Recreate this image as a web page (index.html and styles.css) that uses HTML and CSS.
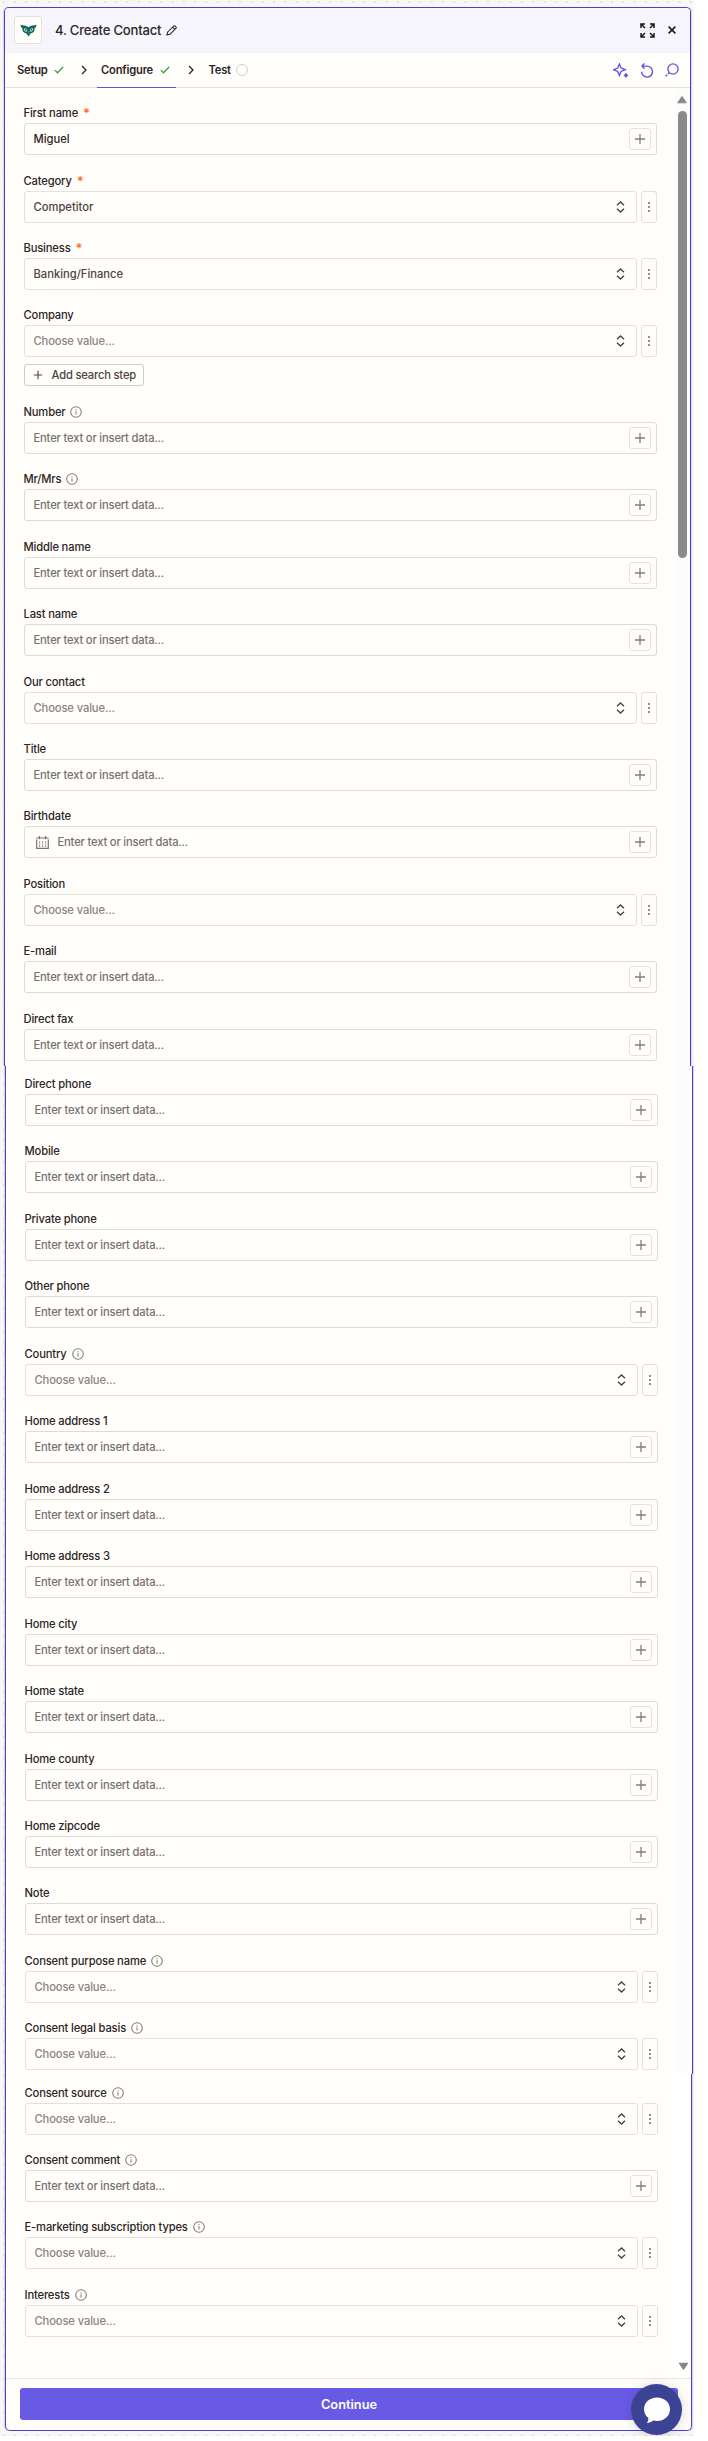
FILE: index.html
```html
<!DOCTYPE html>
<html lang="en">
<head>
<meta charset="utf-8">
<title>Create Contact</title>
<link rel="stylesheet" href="styles.css">
</head>
<body>
<svg class="defs" aria-hidden="true">
  <symbol id="plus" viewBox="0 0 12 12"><path d="M6 1v10M1 6h10" stroke="currentColor" stroke-width="1.3" fill="none"/></symbol>
  <symbol id="updown" viewBox="0 0 9 12"><path d="M1 4.2 4.5 1 8 4.2M1 7.8 4.5 11 8 7.8" stroke="#4a403d" stroke-width="1.35" fill="none"/></symbol>
  <symbol id="dots" viewBox="0 0 4 12"><g fill="#6f6966"><circle cx="2" cy="2" r="1"/><circle cx="2" cy="6" r="1"/><circle cx="2" cy="10" r="1"/></g></symbol>
  <symbol id="info" viewBox="0 0 12 12"><circle cx="6" cy="6" r="5.3" stroke="#7d7875" stroke-width="1.05" fill="none"/><path d="M6 5.2v3.4M6 3.2v1.1" stroke="#7d7875" stroke-width="1"/></symbol>
  <symbol id="check" viewBox="0 0 10 8"><path d="m.8 4.1 2.7 2.7L9.1 1" stroke="#2ba144" stroke-width="1.3" fill="none"/></symbol>
  <symbol id="chev" viewBox="0 0 6 10"><path d="m1 1 4 4-4 4" stroke="#2d2525" stroke-width="1.3" fill="none"/></symbol>
</svg>
<main class="canvas">
<section class="seg seg-a">
  <header class="head">
    <span class="app"><svg width="17" height="13" viewBox="0 0 17 13"><path d="M.5.8C3 1.600 6 1 8.500 3.300 11 1 14 1.600 16.500.8c-.1 1.900-.9 2.900-1.900 3.500.3 3-1.100 4.700-3.700 4.900L8.500 12.400 6.100 9.200C3.500 9 2.100 7.300 2.400 4.300 1.400 3.700.6 2.700.5.8z" fill="#17675f"/><path d="M3.900 4.500c1.300-.3 2.500.1 3.300 1.300l-.5 1.800c-1.700.3-2.800-1-2.800-3.100zM13.100 4.500c-1.300-.3-2.500.1-3.300 1.300l.5 1.800c1.700.3 2.800-1 2.800-3.100z" fill="#d7ece6"/><circle cx="5.700" cy="5.900" r=".8" fill="#17675f"/><circle cx="11.300" cy="5.900" r=".8" fill="#17675f"/><path d="m7.500 7 1 3 1-3" fill="#2d9a80"/></svg></span>
    <h1 class="title">4. Create Contact</h1>
    <svg class="pencil" width="11" height="11" viewBox="0 0 11 11"><path d="M.9 10.100 1.700 7 7.900.9q.5-.4 1 0l1.200 1.200q.4.500 0 1L3.900 9.300zM6.600 2.200l2.200 2.200" stroke="#2d2525" stroke-width="1.050" fill="none" stroke-linejoin="round"/></svg>
    <svg class="expand" width="15" height="15" viewBox="0 0 15 15"><path d="M1 5V1h4M1 1l4 4M10 1h4v4M14 1l-4 4M1 10v4h4M1 14l4-4M14 10v4h-4M14 14l-4-4" stroke="#1d1517" stroke-width="1.500" fill="none"/></svg>
    <svg class="close" width="8" height="8" viewBox="0 0 8 8"><path d="m.6.6 6.800 6.800M7.400.6.6 7.400" stroke="#1d1517" stroke-width="1.500"/></svg>
  </header>
  <nav class="tabs">
    <span class="tab">Setup <svg width="10" height="8"><use href="#check"/></svg></span>
    <svg class="chev" width="6" height="10"><use href="#chev"/></svg>
    <span class="tab tab-on">Configure <svg width="10" height="8"><use href="#check"/></svg></span>
    <svg class="chev" width="6" height="10"><use href="#chev"/></svg>
    <span class="tab tab-test">Test <i class="ring"></i></span>
    <span class="tools">
      <svg width="15" height="15" viewBox="0 0 15 15"><path d="M6.400 1 8 5l4.200 1.700L8 8.400l-1.600 4.100-1.700-4.100L.7 6.700 4.700 5z" stroke="#6353df" stroke-width="1.350" fill="none"/><path d="M12.900 10.200v4.200M10.800 12.300H15" stroke="#6353df" stroke-width="1.700"/></svg>
      <svg width="14" height="15" viewBox="0 0 14 15"><path d="M1.500 8.800a5.500 5.500 0 1 0 5.500-5.700H2M4.500.5 1.900 3.100l2.600 2.700" stroke="#6353df" stroke-width="1.400" fill="none"/></svg>
      <svg width="14" height="14" viewBox="0 0 14 14"><circle cx="8" cy="6" r="5.100" stroke="#6353df" stroke-width="1.350" fill="none"/><path d="M4.200 9.800 3 11M2.200 11.800.8 13.200" stroke="#6353df" stroke-width="1.600"/></svg>
    </span>
  </nav>
  <div class="body">
    <div class="fields">
      <div class="field"><div class="label">First name <b>*</b></div><div class="row"><div class="box input value-strong">Miguel<span class="add"><svg><use href="#plus"/></svg></span></div></div></div>
      <div class="field"><div class="label">Category <b>*</b></div><div class="row"><div class="box value">Competitor<svg class="ud"><use href="#updown"/></svg></div><div class="more"><svg><use href="#dots"/></svg></div></div></div>
      <div class="field"><div class="label">Business <b>*</b></div><div class="row"><div class="box value">Banking/Finance<svg class="ud"><use href="#updown"/></svg></div><div class="more"><svg><use href="#dots"/></svg></div></div></div>
      <div class="field field-step"><div class="label">Company</div><div class="row"><div class="box">Choose value...<svg class="ud"><use href="#updown"/></svg></div><div class="more"><svg><use href="#dots"/></svg></div></div><div class="step"><svg><use href="#plus"/></svg>Add search step</div></div>
      <div class="field"><div class="label">Number <svg><use href="#info"/></svg></div><div class="row"><div class="box input">Enter text or insert data...<span class="add"><svg><use href="#plus"/></svg></span></div></div></div>
      <div class="field"><div class="label">Mr/Mrs <svg><use href="#info"/></svg></div><div class="row"><div class="box input">Enter text or insert data...<span class="add"><svg><use href="#plus"/></svg></span></div></div></div>
      <div class="field"><div class="label">Middle name</div><div class="row"><div class="box input">Enter text or insert data...<span class="add"><svg><use href="#plus"/></svg></span></div></div></div>
      <div class="field"><div class="label">Last name</div><div class="row"><div class="box input">Enter text or insert data...<span class="add"><svg><use href="#plus"/></svg></span></div></div></div>
      <div class="field"><div class="label">Our contact</div><div class="row"><div class="box">Choose value...<svg class="ud"><use href="#updown"/></svg></div><div class="more"><svg><use href="#dots"/></svg></div></div></div>
      <div class="field"><div class="label">Title</div><div class="row"><div class="box input">Enter text or insert data...<span class="add"><svg><use href="#plus"/></svg></span></div></div></div>
      <div class="field"><div class="label">Birthdate</div><div class="row"><div class="box input"><svg class="cal" width="13" height="13" viewBox="0 0 13 13"><path d="M.7 3.500v8.900h11.600V3.500M.2 2h12.600M3.500 0v3.200M9.500 0v3.200" stroke="#7b7571" stroke-width="1.200" fill="none"/><path d="M3 5.800h7.500M3 8h7.500M3 10.200h7.500" stroke="#7b7571" stroke-width="1.200" stroke-dasharray="1.200 1.800"/></svg>Enter text or insert data...<span class="add"><svg><use href="#plus"/></svg></span></div></div></div>
      <div class="field"><div class="label">Position</div><div class="row"><div class="box">Choose value...<svg class="ud"><use href="#updown"/></svg></div><div class="more"><svg><use href="#dots"/></svg></div></div></div>
      <div class="field"><div class="label">E-mail</div><div class="row"><div class="box input">Enter text or insert data...<span class="add"><svg><use href="#plus"/></svg></span></div></div></div>
      <div class="field"><div class="label">Direct fax</div><div class="row"><div class="box input">Enter text or insert data...<span class="add"><svg><use href="#plus"/></svg></span></div></div></div>
    </div>
    <div class="track track-top"><svg class="arrow" width="10" height="8" viewBox="0 0 10 8"><path d="M5 .5 9.300 6.800H.7z" fill="#8a8a8a" stroke="#8a8a8a" stroke-linejoin="round"/></svg><i class="thumb"></i></div>
  </div>
</section>
<section class="seg seg-b">
  <div class="body">
    <div class="fields">
      <div class="field"><div class="label">Direct phone</div><div class="row"><div class="box input">Enter text or insert data...<span class="add"><svg><use href="#plus"/></svg></span></div></div></div>
      <div class="field"><div class="label">Mobile</div><div class="row"><div class="box input">Enter text or insert data...<span class="add"><svg><use href="#plus"/></svg></span></div></div></div>
      <div class="field"><div class="label">Private phone</div><div class="row"><div class="box input">Enter text or insert data...<span class="add"><svg><use href="#plus"/></svg></span></div></div></div>
      <div class="field"><div class="label">Other phone</div><div class="row"><div class="box input">Enter text or insert data...<span class="add"><svg><use href="#plus"/></svg></span></div></div></div>
      <div class="field"><div class="label">Country <svg><use href="#info"/></svg></div><div class="row"><div class="box">Choose value...<svg class="ud"><use href="#updown"/></svg></div><div class="more"><svg><use href="#dots"/></svg></div></div></div>
      <div class="field"><div class="label">Home address 1</div><div class="row"><div class="box input">Enter text or insert data...<span class="add"><svg><use href="#plus"/></svg></span></div></div></div>
      <div class="field"><div class="label">Home address 2</div><div class="row"><div class="box input">Enter text or insert data...<span class="add"><svg><use href="#plus"/></svg></span></div></div></div>
      <div class="field"><div class="label">Home address 3</div><div class="row"><div class="box input">Enter text or insert data...<span class="add"><svg><use href="#plus"/></svg></span></div></div></div>
      <div class="field"><div class="label">Home city</div><div class="row"><div class="box input">Enter text or insert data...<span class="add"><svg><use href="#plus"/></svg></span></div></div></div>
      <div class="field"><div class="label">Home state</div><div class="row"><div class="box input">Enter text or insert data...<span class="add"><svg><use href="#plus"/></svg></span></div></div></div>
      <div class="field"><div class="label">Home county</div><div class="row"><div class="box input">Enter text or insert data...<span class="add"><svg><use href="#plus"/></svg></span></div></div></div>
      <div class="field"><div class="label">Home zipcode</div><div class="row"><div class="box input">Enter text or insert data...<span class="add"><svg><use href="#plus"/></svg></span></div></div></div>
      <div class="field"><div class="label">Note</div><div class="row"><div class="box input">Enter text or insert data...<span class="add"><svg><use href="#plus"/></svg></span></div></div></div>
      <div class="field"><div class="label">Consent purpose name <svg><use href="#info"/></svg></div><div class="row"><div class="box">Choose value...<svg class="ud"><use href="#updown"/></svg></div><div class="more"><svg><use href="#dots"/></svg></div></div></div>
      <div class="field"><div class="label">Consent legal basis <svg><use href="#info"/></svg></div><div class="row"><div class="box">Choose value...<svg class="ud"><use href="#updown"/></svg></div><div class="more"><svg><use href="#dots"/></svg></div></div></div>
    </div>
    <div class="track"></div>
  </div>
</section>
<section class="seg seg-c">
  <div class="body">
    <div class="fields">
      <div class="field"><div class="label">Consent source <svg><use href="#info"/></svg></div><div class="row"><div class="box">Choose value...<svg class="ud"><use href="#updown"/></svg></div><div class="more"><svg><use href="#dots"/></svg></div></div></div>
      <div class="field"><div class="label">Consent comment <svg><use href="#info"/></svg></div><div class="row"><div class="box input">Enter text or insert data...<span class="add"><svg><use href="#plus"/></svg></span></div></div></div>
      <div class="field"><div class="label">E-marketing subscription types <svg><use href="#info"/></svg></div><div class="row"><div class="box">Choose value...<svg class="ud"><use href="#updown"/></svg></div><div class="more"><svg><use href="#dots"/></svg></div></div></div>
      <div class="field"><div class="label">Interests <svg><use href="#info"/></svg></div><div class="row"><div class="box">Choose value...<svg class="ud"><use href="#updown"/></svg></div><div class="more"><svg><use href="#dots"/></svg></div></div></div>
    </div>
    <div class="track track-end"><svg width="11" height="9" viewBox="0 0 11 9"><path d="M5.500 7.500 9.800 1.200H1.200z" fill="#858585" stroke="#858585" stroke-linejoin="round"/></svg></div>
  </div>
  <footer class="foot"><div class="continue">Continue</div></footer>
</section>
<div class="chat"><svg width="28" height="28" viewBox="0 0 28 28"><path d="M14 1.500C6.700 1.500 1 6.600 1 13.200c0 3.600 1.700 6.700 4.400 8.800.1 2-.6 3.700-1.600 5 2.300 0 4.700-.9 6.400-2.500 1.200.3 2.500.5 3.800.5 7.300 0 13-5.200 13-11.800S21.300 1.500 14 1.500z" fill="#fff"/></svg></div>
</main>
</body>
</html>
```
FILE: styles.css
```css
* { box-sizing: border-box; }
body { margin: 0; background: #fff; font-family: Inter, "Liberation Sans", sans-serif; color: #2d2525; }
svg { display: block; flex: none; }
.defs { position: absolute; width: 0; height: 0; }

.canvas {
  position: relative;
  width: 694px;
  height: 2436px;
  padding-top: 7px;
  background-color: #f8f7f4;
  background-image: radial-gradient(circle, #e4e1db 0.9px, transparent 1.3px);
  background-size: 11.28px 11.28px;
  background-position: -2px -3.600px;
}

.seg { background: #fffefb; border: 0 solid #503fc8; border-left-width: 1px; border-right-width: 1px; box-shadow: 1px 0 0 #d6d2f0, -1px 0 0 #d6d2f0; display: flex; flex-direction: column; }
.seg-a { height: 1059px; width: 687px; margin-left: 4px; border-top-width: 1px; border-radius: 5px 5px 0 0; }
.seg-b { height: 1008px; width: 688px; margin-left: 5px; }
.seg-c { height: 357px; width: 687px; margin-left: 5px; border-bottom-width: 1px; border-radius: 0 0 5px 5px; }

.head { height: 44.500px; background: #f6f5fc; border-radius: 4px 4px 0 0; display: flex; align-items: center; padding: 0 14px 0 9px; }
.app { width: 28px; height: 28px; border: 1px solid #e4e2dc; border-radius: 3px; background: #fffefb; display: flex; align-items: center; justify-content: center; }
.title { margin: 0 0 0 13px; font-size: 13.100px; font-weight: 500; line-height: 20px; letter-spacing: -0.22px; }
.pencil { margin-left: 5px; }
.expand { margin-left: auto; }
.close { margin-left: 13px; }

.tabs { height: 35px; flex: none; border-bottom: 1px solid #e0deda; display: flex; align-items: stretch; padding-left: 12px; }
.tab { display: flex; align-items: center; gap: 6.500px; font-size: 11.200px; font-weight: 600; letter-spacing: -0.22px; padding-top: 1px; }
.tab-on { padding: 1px 6px 0 4px; border-bottom: 1.500px solid #6353df; margin-bottom: -1px; }
.chev { align-self: center; margin: 0 10px 0 17px; }
.tab-on + .chev { margin: 0 14.500px 0 12.500px; }
.tab-test { gap: 5px; }
.ring { width: 12px; height: 12px; border: 1px solid #d3d0c9; border-radius: 50%; }
.tools { margin-left: auto; display: flex; align-items: center; gap: 11.500px; padding: 1px 11px 0 0; }

.body { flex: 1; min-height: 0; display: flex; }
.fields { width: 633.500px; margin-left: 18.500px; padding-top: 15.600px; }
.seg-b .fields { padding-top: 8px; }
.seg-c .fields { width: 633px; padding-top: 8.500px; }
.field { height: 67.460px; }
.field-step { height: 96.300px; }
.label { height: 20px; display: flex; align-items: center; gap: 5px; font-size: 11.200px; font-weight: 500; white-space: nowrap; letter-spacing: -0.16px; }
.label b { color: #ff6a2a; font-weight: 600; font-size: 13px; line-height: 12px; }
.label svg { width: 12px; height: 12px; }
.row { display: flex; gap: 4px; }
.box { flex: 1; height: 32px; border: 1px solid #e3e1d9; border-radius: 3px; padding: 0 11px 0 9px; display: flex; align-items: center; font-size: 11.200px; font-weight: 450; color: #8a8582; letter-spacing: -0.12px; }
.input { border-color: #dddbd2; color: #77716e; padding-right: 5px; letter-spacing: -0.18px; }
.value { color: #4d4340; letter-spacing: 0; }
.value-strong { color: #2d2525; letter-spacing: 0; }
.ud { width: 9px; height: 12px; margin-left: auto; }
.add { width: 22px; height: 22px; margin-left: auto; border: 1px solid #e5e3db; border-radius: 3px; display: flex; align-items: center; justify-content: center; color: #827d79; }
.add svg { width: 12px; height: 12px; }
.more { width: 16px; height: 32px; border: 1px solid #e3e1d9; border-radius: 3px; display: flex; align-items: center; justify-content: center; }
.more svg { width: 4px; height: 12px; }
.cal { margin: 0 9px 0 2px; }
.step { margin-top: 7px; width: 120px; height: 22px; border: 1px solid #cfccc6; border-radius: 3px; display: flex; align-items: center; gap: 9px; padding-left: 8px; font-size: 11.200px; font-weight: 500; color: #4d4340; white-space: nowrap; letter-spacing: -0.18px; }
.step svg { width: 10px; height: 10px; }

.track { margin-left: auto; width: 15px; padding-right: 1px; background: #fcfcfd; display: flex; flex-direction: column; align-items: center; }
.track-top { padding-top: 8px; }
.thumb { width: 9px; height: 447px; margin-top: 7px; border-radius: 4.500px; background: #8a8a8a; }
.track-end { background: #fff; justify-content: flex-end; padding-bottom: 7px; }

.foot { height: 52px; flex: none; border-top: 1px solid #eae8e4; padding: 9px 13px 0 14px; }
.continue { height: 32px; border-radius: 3px; background: #695ae6; color: #fff; font-size: 12.800px; font-weight: 600; display: flex; align-items: center; justify-content: center; }

.chat { position: absolute; left: 631px; top: 2384px; width: 51px; height: 51px; border-radius: 50%; background: #3c4294; box-shadow: 0 1px 12px rgba(0, 0, 0, 0.16); display: flex; align-items: center; justify-content: center; }
```
